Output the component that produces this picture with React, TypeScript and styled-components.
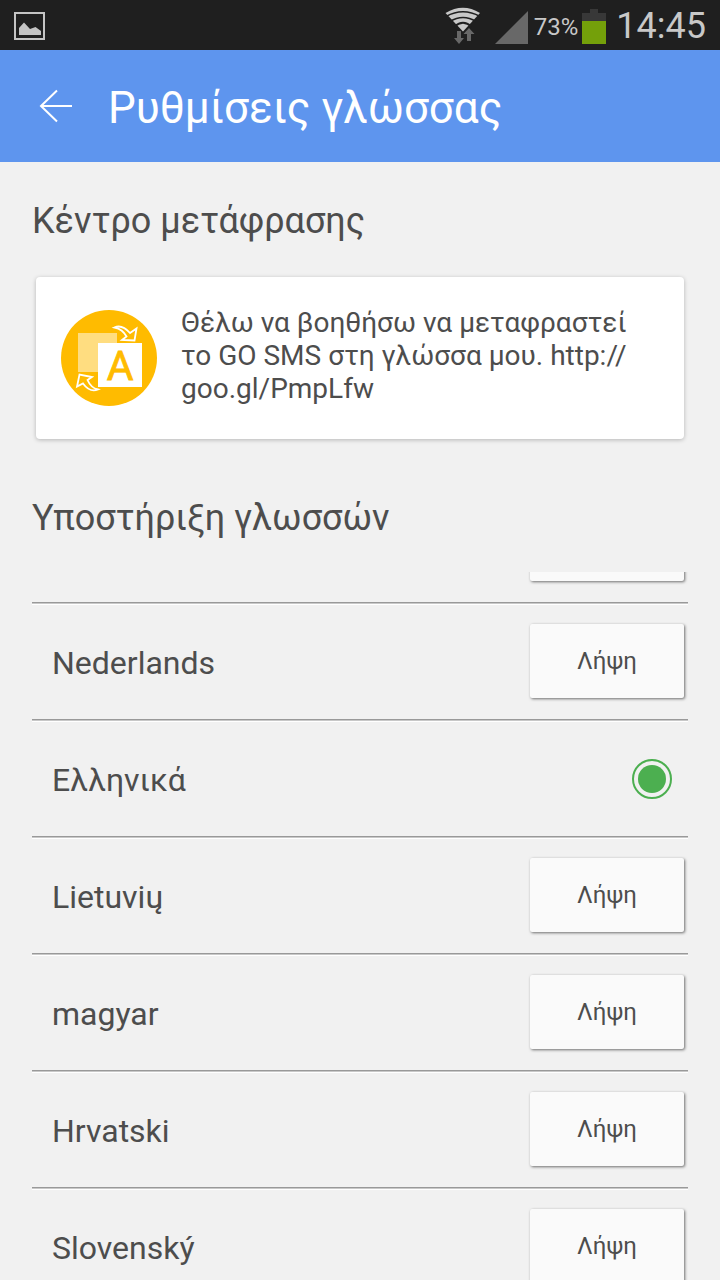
import React, { useLayoutEffect, useRef, useState } from "react";
import styled, { createGlobalStyle } from "styled-components";

const GlobalStyle = createGlobalStyle`
  *, *::before, *::after { box-sizing: border-box; }
  body {
    margin: 0;
    background: #f1f1f1;
    color: #4d4d4d;
    font-family: Roboto, "Noto Sans", sans-serif;
  }
  h1, h2, p, ul { margin: 0; padding: 0; font-weight: 400; }
  button, input { font: inherit; color: inherit; }
`;

const Screen = styled.div`
  display: flex;
  flex-direction: column;
  height: 100vh;
  overflow: hidden;
`;

const StatusBar = styled.div`
  display: flex;
  align-items: center;
  justify-content: space-between;
  flex: none;
  height: 50px;
  padding: 2px 14px 0;
  background: #1f1f1f;
  color: #c8c8c8;

  svg { display: block; flex: none; }
`;

const StatusGroup = styled.div`
  display: flex;
  align-items: center;
`;

const SignalGap = styled.span`
  margin: 2px 0 0 14px;
`;

const BatteryText = styled.span`
  margin: 2px 4px 0 6px;
  font-size: 24px;
  line-height: 28px;
`;

const Clock = styled.time`
  margin-left: 10px;
  font-size: 36px;
  line-height: 48px;
`;

const AppBar = styled.header`
  display: flex;
  align-items: center;
  flex: none;
  height: 112px;
  padding: 0 32px;
  gap: 28px;
  background: #5e95ee;
  color: #fff;
`;

const BackButton = styled.button`
  width: 48px;
  height: 48px;
  padding: 0;
  border: 0;
  background: none;

  svg { display: block; }
`;

const Title = styled.h1`
  padding-top: 4px;
  font-size: 44px;
  line-height: 52px;
  white-space: nowrap;
`;

const SectionTitle = styled.h2`
  flex: none;
  padding: 38px 32px 33px;
  font-size: 36px;
  line-height: 42px;
`;

const Card = styled.section`
  display: flex;
  align-items: flex-start;
  flex: none;
  gap: 24px;
  min-height: 162px;
  margin: 2px 36px 20px;
  padding: 29px 25px;
  border-radius: 4px;
  background: #fff;
  box-shadow: 0 1px 4px rgba(0, 0, 0, 0.25);

  svg { flex: none; margin-top: 4px; }
`;

const CardText = styled.p`
  font-size: 28px;
  line-height: 33px;
`;

const LanguageList = styled.ul`
  flex: 1;
  min-height: 0;
  margin: 0 32px;
  overflow-y: auto;
  list-style: none;
  scrollbar-width: none;
`;

const Row = styled.li`
  display: flex;
  align-items: center;
  justify-content: space-between;
  height: 117px;
  padding: 0 0 5px 20px;
  background: linear-gradient(#999 0 1px, #c8c8c8 1px 2px, #fff 2px 3px) bottom / 100% 3px no-repeat;
`;

const Language = styled.label`
  padding-top: 3px;
  font-size: 32px;
  line-height: 38px;
`;

const DownloadButton = styled.button`
  width: 154px;
  height: 74px;
  margin-right: 4px;
  margin-left: auto;
  padding: 0;
  border: 0;
  border-radius: 2px;
  background: #fafafa;
  box-shadow: 1px 1px 3px rgba(0, 0, 0, 0.55);
  font-size: 24px;
`;

const Radio = styled.input`
  appearance: none;
  width: 40px;
  height: 40px;
  margin: 2px 16px 0 0;
  padding: 4px;
  border: 2px solid #4caf50;
  border-radius: 50%;
  background: #4caf50 content-box;
`;

const PictureIcon = () => (
  <svg width="31" height="28" viewBox="0 0 31 28" aria-hidden="true">
    <rect x="1" y="1" width="29" height="26" fill="none" stroke="#c4c4c4" strokeWidth="2" />
    <path d="M5 23V16L10 10.500L16 17L21.500 15L27 19V23Z" fill="#c4c4c4" />
  </svg>
);

const WifiIcon = () => (
  <svg width="36" height="38" viewBox="0 0 36 38" aria-hidden="true">
    <path d="M0.500 6Q18 -4.500 35 6L18 24.500Z" fill="#c8c8c8" />
    <g fill="none" stroke="#1f1f1f" strokeWidth="1.700">
      <path d="M1 9.500Q18 0 35 9.500" />
      <path d="M5 14.500Q18 6.500 31 14.500" />
      <path d="M9.500 19.500Q18 12 26.500 19.500" />
    </g>
    <path d="M12 24H16V31H19L14 37L9 31H12Z" fill="#686868" />
    <path d="M22 34V27H18.500L24 21L29.500 27H26V34Z" fill="#686868" />
  </svg>
);

const SignalIcon = () => (
  <svg width="33" height="33" viewBox="0 0 33 33" aria-hidden="true">
    <path d="M33 0V33H0Z" fill="#686868" />
  </svg>
);

const BatteryIcon = () => (
  <svg width="24" height="35" viewBox="0 0 24 35" aria-hidden="true">
    <path d="M0 4H8V0H16V4H24V12H0Z" fill="#383838" />
    <path d="M0 12H24V35H0Z" fill="#74a00a" />
  </svg>
);

const BackIcon = () => (
  <svg width="48" height="48" viewBox="0 0 48 48" aria-hidden="true">
    <path d="M40 24H9M25 8.500L9 24L25 39.500" fill="none" stroke="#fff" strokeWidth="2" />
  </svg>
);

const TranslateIcon = () => (
  <svg width="96" height="96" viewBox="0 0 96 96" aria-hidden="true">
    <circle cx="48" cy="48" r="48" fill="#ffbb00" />
    <rect x="17" y="23" width="39" height="39" fill="#ffdd80" />
    <rect x="37" y="33" width="44" height="44" fill="#fff" />
    <path
      d="M53.500 17.500Q61 14 69 23L75.500 18.500L73.500 30.500L61 30L65.500 26.500Q61.500 19 53.500 17.500Z"
      fill="#ffbb00"
      stroke="#fff"
      strokeWidth="1.800"
    />
    <path
      d="M37 79.500Q29 83 22 73.500L16 76.500L18.500 64.500L31 67L26.500 70Q30 78 37 79.500Z"
      fill="#ffbb00"
      stroke="#fff"
      strokeWidth="1.800"
    />
    <text
      x="59"
      y="70"
      textAnchor="middle"
      fontFamily="Roboto, sans-serif"
      fontSize="41"
      fill="#ffbb00"
      stroke="#ffbb00"
      strokeWidth="0.800"
    >
      A
    </text>
  </svg>
);

type Entry = { id: string; name: string; installed?: boolean };

const languages: Entry[] = [
  { id: "first", name: "" },
  { id: "nl", name: "Nederlands" },
  { id: "el", name: "Ελληνικά", installed: true },
  { id: "lt", name: "Lietuvių" },
  { id: "hu", name: "magyar" },
  { id: "hr", name: "Hrvatski" },
  { id: "sk", name: "Slovenský" },
];

const INITIAL_SCROLL = 84;

export default function App() {
  const list = useRef<HTMLUListElement>(null);
  const [selected, setSelected] = useState("el");

  useLayoutEffect(() => {
    if (list.current) list.current.scrollTop = INITIAL_SCROLL;
  }, []);

  return (
    <>
      <GlobalStyle />
      <Screen>
        <StatusBar>
          <PictureIcon />
          <StatusGroup>
            <WifiIcon />
            <SignalGap>
              <SignalIcon />
            </SignalGap>
            <BatteryText>73%</BatteryText>
            <BatteryIcon />
            <Clock>14:45</Clock>
          </StatusGroup>
        </StatusBar>
        <AppBar>
          <BackButton type="button" aria-label="Πίσω">
            <BackIcon />
          </BackButton>
          <Title>Ρυθμίσεις γλώσσας</Title>
        </AppBar>
        <SectionTitle>Κέντρο μετάφρασης</SectionTitle>
        <Card>
          <TranslateIcon />
          <CardText>
            Θέλω να βοηθήσω να μεταφραστεί το GO SMS στη γλώσσα μου. http://<wbr />goo.gl/PmpLfw
          </CardText>
        </Card>
        <SectionTitle>Υποστήριξη γλωσσών</SectionTitle>
        <LanguageList ref={list}>
          {languages.map(({ id, name, installed }) => (
            <Row key={id}>
              {name && <Language htmlFor={`lang-${id}`}>{name}</Language>}
              {installed ? (
                <Radio
                  type="radio"
                  name="language"
                  id={`lang-${id}`}
                  checked={selected === id}
                  onChange={() => setSelected(id)}
                />
              ) : (
                <DownloadButton type="button" id={`lang-${id}`}>
                  {name && "Λήψη"}
                </DownloadButton>
              )}
            </Row>
          ))}
        </LanguageList>
      </Screen>
    </>
  );
}
